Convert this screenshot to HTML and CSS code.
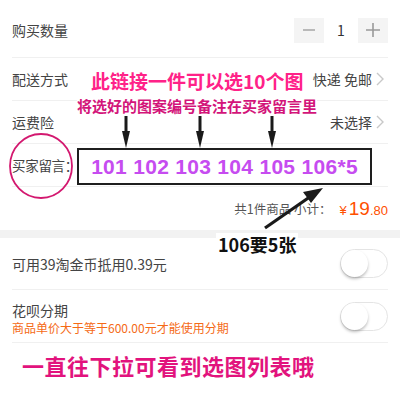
FILE: index.html
```html
<!DOCTYPE html>
<html lang="zh">
<head>
    <meta charset="UTF-8">
    <meta name="viewport" content="width=device-width, initial-scale=1.0">
    <title>确认订单</title>
    <link rel="stylesheet" href="styles.css">
</head>
<body>
    <div class="page">
        <div class="row row-qty">
            <span class="label">购买数量</span>
            <div class="stepper">
                <span class="step-btn">
                    <svg width="12" height="12" viewBox="0 0 12 12"><path d="M0 6H12" stroke="#aaa" stroke-width="1.6"/></svg>
                </span>
                <span class="step-num">1</span>
                <span class="step-btn">
                    <svg width="14" height="14" viewBox="0 0 14 14"><path d="M0 7H14M7 0V14" stroke="#999" stroke-width="1.6"/></svg>
                </span>
            </div>
        </div>
        <div class="row">
            <span class="label">配送方式</span>
            <span class="value">快递 免邮
                <svg class="chev" width="8" height="14" viewBox="0 0 8 14"><path d="M1 1L7 7L1 13" fill="none" stroke="#c8c8c8" stroke-width="1.4"/></svg>
            </span>
        </div>
        <div class="row">
            <span class="label">运费险</span>
            <span class="value">未选择
                <svg class="chev" width="8" height="14" viewBox="0 0 8 14"><path d="M1 1L7 7L1 13" fill="none" stroke="#c8c8c8" stroke-width="1.4"/></svg>
            </span>
        </div>
        <div class="row">
            <span class="label label-msg">买家留言：</span>
        </div>
        <div class="row row-total">
            <span class="total-text">共1件商品&nbsp;小计：</span>
            <span class="price"><span class="yen">¥</span><span class="big">19</span><span class="small">.80</span></span>
        </div>
        <div class="band"></div>
        <div class="row row-switch">
            <span class="label">可用39淘金币抵用0.39元</span>
            <span class="switch"><span class="knob"></span></span>
        </div>
        <div class="row row-switch row-huabei">
            <div class="stack">
                <span class="label">花呗分期</span>
                <span class="note">商品单价大于等于600.00元才能使用分期</span>
            </div>
            <span class="switch"><span class="knob"></span></span>
        </div>
        <div class="footer-note">一直往下拉可看到选图列表哦</div>

        <!-- annotations drawn over the screenshot -->
        <svg class="marks" width="400" height="400" viewBox="0 0 400 400">
            <ellipse cx="41" cy="166" rx="31" ry="32" fill="none" stroke="#d3186f" stroke-width="1.8"/>
            <g fill="#1a1a1a" stroke="#1a1a1a">
                <path d="M126 115V136" stroke-width="3"/>
                <path d="M122 131L130 131L126 148Z" stroke="none"/>
                <path d="M200 115V136" stroke-width="3"/>
                <path d="M196 131L204 131L200 148Z" stroke="none"/>
                <path d="M272 115V136" stroke-width="3"/>
                <path d="M268 131L276 131L272 148Z" stroke="none"/>
                <path d="M265 228L314 194" stroke-width="3.2"/>
                <path d="M323 188L303 192L311 203Z" stroke="none"/>
            </g>
        </svg>
        <div class="tip tip-main">此链接一件可以选10个图</div>
        <div class="tip tip-sub">将选好的图案编号备注在买家留言里</div>
        <div class="code-box">101 102 103 104 105 106*5</div>
        <div class="tip tip-count">106要5张</div>
    </div>
</body>
</html>
```

FILE: styles.css
```css
body {
    margin: 0;
    background: #ffffff;
    font-family: "Noto Sans CJK SC", "Noto Sans", sans-serif;
    color: #444;
}
.page {
    position: relative;
    width: 400px;
    height: 400px;
    overflow: hidden;
}
.row {
    display: flex;
    align-items: center;
    justify-content: space-between;
    margin: 0 12px;
    height: 42px;
    border-bottom: 1px solid #f0f0f0;
}
.row-qty {
    height: 54px;
    padding-top: 3px;
}
.label {
    font-size: 14px;
    line-height: 18px;
    color: #444;
}
.label-msg {
    font-size: 13.5px;
    letter-spacing: -0.3px;
}
.value {
    display: flex;
    align-items: center;
    gap: 4px;
    font-size: 14px;
    color: #444;
    margin-right: 4px;
}
.stepper {
    display: flex;
    align-items: center;
}
.step-btn {
    display: flex;
    align-items: center;
    justify-content: center;
    width: 30px;
    height: 25px;
    background: #f4f4f4;
}
.step-num {
    width: 34px;
    text-align: center;
    font-size: 14px;
    color: #333;
}
.row-total {
    justify-content: flex-end;
    height: 43px;
    border-bottom: none;
}
.total-text {
    font-size: 12.5px;
    color: #555;
    margin-right: 8px;
}
.price {
    color: #ff5000;
    font-family: "Liberation Sans", Arial, sans-serif;
}
.yen {
    font-size: 13px;
    margin-right: 2px;
}
.big {
    font-size: 19px;
}
.small {
    font-size: 13px;
}
.band {
    height: 8px;
    background: #f2f2f2;
}
.row-switch {
    height: 51px;
}
.row-huabei {
    height: 52px;
}
.stack {
    display: flex;
    flex-direction: column;
    padding-top: 4px;
}
.note {
    margin-top: 1px;
    font-size: 12px;
    line-height: 15px;
    color: #f56a16;
}
.switch {
    position: relative;
    width: 46px;
    height: 27px;
    border: 1px solid #e4e4e4;
    border-radius: 15px;
    background: #fff;
}
.knob {
    position: absolute;
    left: 0;
    top: 0;
    width: 27px;
    height: 27px;
    border-radius: 50%;
    background: #fff;
    box-shadow: 0 2px 3px rgba(0, 0, 0, 0.25);
}
.footer-note {
    margin-top: 7px;
    padding-left: 22px;
    font-size: 22px;
    line-height: 30px;
    letter-spacing: 0.5px;
    font-weight: bold;
    color: #e2137d;
}
.marks {
    position: absolute;
    left: 0;
    top: 0;
    pointer-events: none;
}
.tip {
    position: absolute;
    font-weight: bold;
    white-space: nowrap;
}
.tip-main {
    left: 91px;
    top: 68px;
    font-size: 19px;
    line-height: 26px;
    color: #ff2288;
}
.tip-sub {
    left: 77px;
    top: 96px;
    font-size: 15px;
    line-height: 20px;
    color: #d3157a;
    background: #fff;
}
.tip-count {
    left: 216px;
    top: 233px;
    padding: 0 2px;
    font-size: 18px;
    line-height: 22px;
    color: #111;
    background: #fff;
}
.code-box {
    position: absolute;
    left: 77px;
    top: 148px;
    width: 291px;
    height: 33px;
    border: 2px solid #1e1e1e;
    background: #fff;
    font-family: "Liberation Sans", Arial, sans-serif;
    font-weight: bold;
    font-size: 21px;
    letter-spacing: 0.3px;
    line-height: 33px;
    text-align: center;
    color: #c64cf0;
}
```
